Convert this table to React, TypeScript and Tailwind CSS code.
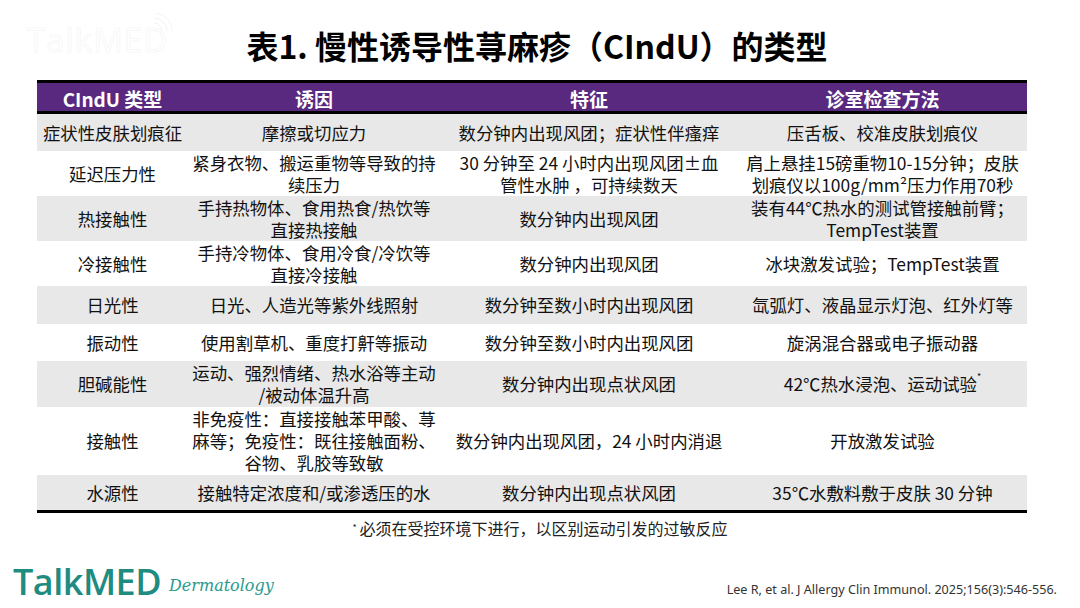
import React from "react";

type Row = {
  type: string;
  cause: string[];
  feature: string[];
  test: React.ReactNode[];
  h: string;
  gray: boolean;
};

const rows: Row[] = [
  { type: "症状性皮肤划痕征", cause: ["摩擦或切应力"], feature: ["数分钟内出现风团；症状性伴瘙痒"], test: ["压舌板、校准皮肤划痕仪"], h: "h-[37px]", gray: true },
  {
    type: "延迟压力性",
    cause: ["紧身衣物、搬运重物等导致的持", "续压力"],
    feature: ["30 分钟至 24 小时内出现风团±血", "管性水肿 ，可持续数天"],
    test: ["肩上悬挂15磅重物10-15分钟；皮肤", "划痕仪以100g/mm²压力作用70秒"],
    h: "h-[45px]",
    gray: false,
  },
  { type: "热接触性", cause: ["手持热物体、食用热食/热饮等", "直接热接触"], feature: ["数分钟内出现风团"], test: ["装有44℃热水的测试管接触前臂；", "TempTest装置"], h: "h-[45px]", gray: true },
  { type: "冷接触性", cause: ["手持冷物体、食用冷食/冷饮等", "直接冷接触"], feature: ["数分钟内出现风团"], test: ["冰块激发试验；TempTest装置"], h: "h-[45px]", gray: false },
  { type: "日光性", cause: ["日光、人造光等紫外线照射"], feature: ["数分钟至数小时内出现风团"], test: ["氙弧灯、液晶显示灯泡、红外灯等"], h: "h-[38px]", gray: true },
  { type: "振动性", cause: ["使用割草机、重度打鼾等振动"], feature: ["数分钟至数小时内出现风团"], test: ["旋涡混合器或电子振动器"], h: "h-[37px]", gray: false },
  {
    type: "胆碱能性",
    cause: ["运动、强烈情绪、热水浴等主动", "/被动体温升高"],
    feature: ["数分钟内出现点状风团"],
    test: [
      <span key="t">
        42℃热水浸泡、运动试验<sup className="text-[9px] align-super">*</sup>
      </span>,
    ],
    h: "h-[46px]",
    gray: true,
  },
  {
    type: "接触性",
    cause: ["非免疫性：直接接触苯甲酸、荨", "麻等；免疫性：既往接触面粉、", "谷物、乳胶等致敏"],
    feature: ["数分钟内出现风团，24 小时内消退"],
    test: ["开放激发试验"],
    h: "h-[68px]",
    gray: false,
  },
  { type: "水源性", cause: ["接触特定浓度和/或渗透压的水"], feature: ["数分钟内出现点状风团"], test: ["35℃水敷料敷于皮肤 30 分钟"], h: "h-[35px]", gray: true },
];

const Cell = ({ lines }: { lines: React.ReactNode[] }) => (
  <div className="flex flex-col items-center justify-center text-center whitespace-nowrap">
    {lines.map((l, i) => (
      <div key={i} className="h-[22px]">{l}</div>
    ))}
  </div>
);

const cols = "grid grid-cols-[151px_252px_298px_289px]";

export default function App() {
  return (
    <div className="w-[1080px] h-[608px] bg-white overflow-hidden flex flex-col font-['Noto_Sans_CJK_SC',sans-serif] text-[#111]">
      {/* header */}
      <div className="grid grid-cols-[1fr_auto_1fr] h-[80px]">
        <div className="relative pl-[27px] pt-[20px]">
          <span className="font-['Open_Sans',sans-serif] text-[33px] leading-[40px] tracking-[1px] text-transparent [-webkit-text-stroke:0.6px_#f4f4f4]">
            TalkMED
          </span>
          <svg className="absolute left-[152px] top-[13px]" width="26" height="26" viewBox="0 0 26 26" fill="none" stroke="#f4f4f4" strokeWidth="1">
            <path d="M2 10 A8 8 0 0 1 10 18" />
            <path d="M2 5 A13 13 0 0 1 15 18" />
            <path d="M2 0 A18 18 0 0 1 20 18" />
          </svg>
        </div>
        <h1 className="pt-[25px] text-[32px] leading-[40px] font-bold text-black -ml-[6px]">
          表1. 慢性诱导性荨麻疹（CIndU）的类型
        </h1>
        <div />
      </div>

      {/* table */}
      <div className="ml-[37px] w-[990px] border-t-[3px] border-b-[3px] border-black">
        <div className={`${cols} h-[31px] bg-[#59297f] border-b-[3px] border-black text-white font-bold text-[19px] leading-[31px]`}>
          <div className="text-center">CIndU 类型</div>
          <div className="text-center">诱因</div>
          <div className="text-center">特征</div>
          <div className="text-center">诊室检查方法</div>
        </div>
        {rows.map((r, i) => (
          <div key={i} className={`${cols} ${r.h} ${r.gray ? "bg-[#e8e8e8]" : "bg-white"} text-[17.4px] leading-[22px]`}>
            <Cell lines={[r.type]} />
            <Cell lines={r.cause} />
            <Cell lines={r.feature} />
            <Cell lines={r.test} />
          </div>
        ))}
      </div>

      <div className="mt-[4px] text-center text-[16px] leading-[22px] text-[#222]">
        <sup className="text-[9px] mr-[3px]">*</sup>必须在受控环境下进行，以区别运动引发的过敏反应
      </div>

      {/* footer */}
      <div className="mt-auto mb-[6px] flex items-end justify-between pl-[13px] pr-[23px]">
        <div className="flex items-end">
          <span className="font-['Open_Sans',sans-serif] font-semibold text-[36px] leading-[40px] text-[#1f8b81] tracking-[-0.5px]">TalkMED</span>
          <span className="ml-[8px] mb-[6px] font-['DejaVu_Serif',serif] italic text-[16px] leading-[20px] text-[#2a9a90]">Dermatology</span>
        </div>
        <div className="mb-[4px] font-['Noto_Sans',sans-serif] text-[12.6px] leading-[16px] text-[#333]">
          Lee R, et al. J Allergy Clin Immunol. 2025;156(3):546-556.
        </div>
      </div>
    </div>
  );
}
